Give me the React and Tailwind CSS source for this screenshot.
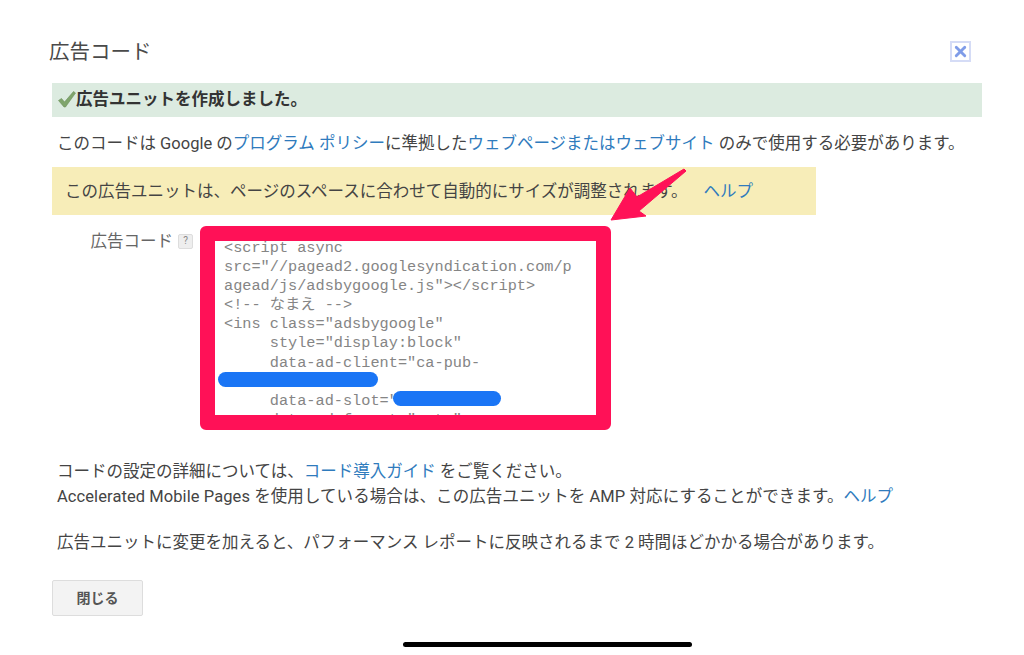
import { X } from 'lucide-react';

const codeLines = [
  '<script async',
  'src="//pagead2.googlesyndication.com/p',
  'agead/js/adsbygoogle.js"></script>',
  '<!-- なまえ -->',
  '<ins class="adsbygoogle"',
  '     style="display:block"',
  '     data-ad-client="ca-pub-',
  '',
  '     data-ad-slot="',
  '     data-ad-format="auto"',
];

const Link = ({ children }) => <span className="text-[#2f7bbd]">{children}</span>;

const App = () => {
  return (
    <div className="relative w-[1024px] h-[655px] bg-white overflow-hidden text-[16.5px] text-[#444444] font-['Roboto','Noto_Sans_CJK_JP',sans-serif]">
      <div className="flex flex-col pl-[52px] pr-[42px] pt-[40px]">
        <div className="flex items-center justify-between h-[24px] pr-[11px]">
          <h1 className="-ml-[3px] text-[20.5px] leading-[24px] font-normal text-[#4a4a4a]">広告コード</h1>
          <div className="-mt-[1px] w-[21px] h-[21px] flex items-center justify-center border-2 border-[#d5dcf6] text-[#7f9ce8]">
            <X size={17} strokeWidth={4} />
          </div>
        </div>

        <div className="mt-[19px] h-[34px] flex items-center pl-[6px] bg-[#dcebe0] font-bold text-[#333333]">
          <svg width="18" height="17" viewBox="0 0 18 17" className="shrink-0 -mt-[2px]">
            <path d="M0.5 9.5 L3.5 7.5 L6.5 11 L15.5 0.5 L17.5 2 L7.5 16 L6 16 Z" fill="#7fa56c" stroke="#6b8f5a" strokeWidth="0.6" />
          </svg>
          <span className="pt-[1px]">広告ユニットを作成しました。</span>
        </div>

        <p className="mt-[17px] ml-[5px] leading-[20px] whitespace-nowrap">
          このコードは Google の<Link>プログラム ポリシー</Link>に準拠した<Link>ウェブページまたはウェブサイト</Link> のみで使用する必要があります。
        </p>

        <div className="mt-[13px] w-[764px] h-[48px] flex items-center pl-[13px] pt-[2px] bg-[#f7edb8] whitespace-nowrap">
          <span>この広告ユニットは、ページのスペースに合わせて自動的にサイズが調整されます。</span>
          <span className="ml-[16px]"><Link>ヘルプ</Link></span>
        </div>

        <div className="mt-[11px] flex items-start">
          <div className="w-[148px] pt-[6px] flex items-center justify-end gap-[5px] pr-[7px] text-[#666666]">
            <span className="leading-[20px]">広告コード</span>
            <span className="-mt-[2px] w-[15px] h-[15px] flex items-center justify-center rounded-[2px] bg-[#eeeeee] border border-[#dddddd] text-[10px] leading-none text-[#888888]">?</span>
          </div>
          <div className="w-[411px] h-[204px] rounded-[6px] border-[15px] border-[#ff1157] bg-white">
            <div className="relative h-full overflow-hidden pl-[9px] font-['Liberation_Mono','Noto_Sans_CJK_JP',monospace] text-[15.25px] leading-[19.2px] text-[#858585]">
              <div className="-mt-[2.5px]">
                {codeLines.map((line, i) => (
                  <div key={i} className="h-[19.2px] whitespace-pre">{line}</div>
                ))}
              </div>
              <div className="absolute left-[3px] top-[131px] w-[160px] h-[15px] rounded-full bg-[#1a75f5]" />
              <div className="absolute left-[178px] top-[150px] w-[108px] h-[15px] rounded-full bg-[#1a75f5]" />
            </div>
          </div>
        </div>

        <p className="mt-[29px] ml-[5px] leading-[25px] whitespace-nowrap">
          コードの設定の詳細については、<Link>コード導入ガイド</Link> をご覧ください。
          <br />
          <span className="tracking-[0.08px]">Accelerated Mobile Pages を使用している場合は、この広告ユニットを AMP 対応にすることができます。</span><Link>ヘルプ</Link>
        </p>

        <p className="mt-[24px] ml-[5px] leading-[20px] whitespace-nowrap">
          広告ユニットに変更を加えると、パフォーマンス レポートに反映されるまで 2 時間ほどかかる場合があります。
        </p>

        <button className="mt-[27px] w-[91px] h-[36px] rounded-[2px] border border-[#dddddd] bg-[#f3f3f3] text-[14px] font-bold text-[#555555]">閉じる</button>
      </div>

      <svg className="absolute left-[605px] top-[165px]" width="85" height="60" viewBox="0 0 85 60">
        <path d="M6 55 L25 23 L32 32 L79 4 L81 6 L34 46 L41 51 Z" fill="#ff1157" stroke="#ff1157" strokeWidth="1" strokeLinejoin="round" />
      </svg>

      <div className="absolute left-[403px] top-[642px] w-[289px] h-[5px] rounded-full bg-black" />
    </div>
  );
};

export default App;
